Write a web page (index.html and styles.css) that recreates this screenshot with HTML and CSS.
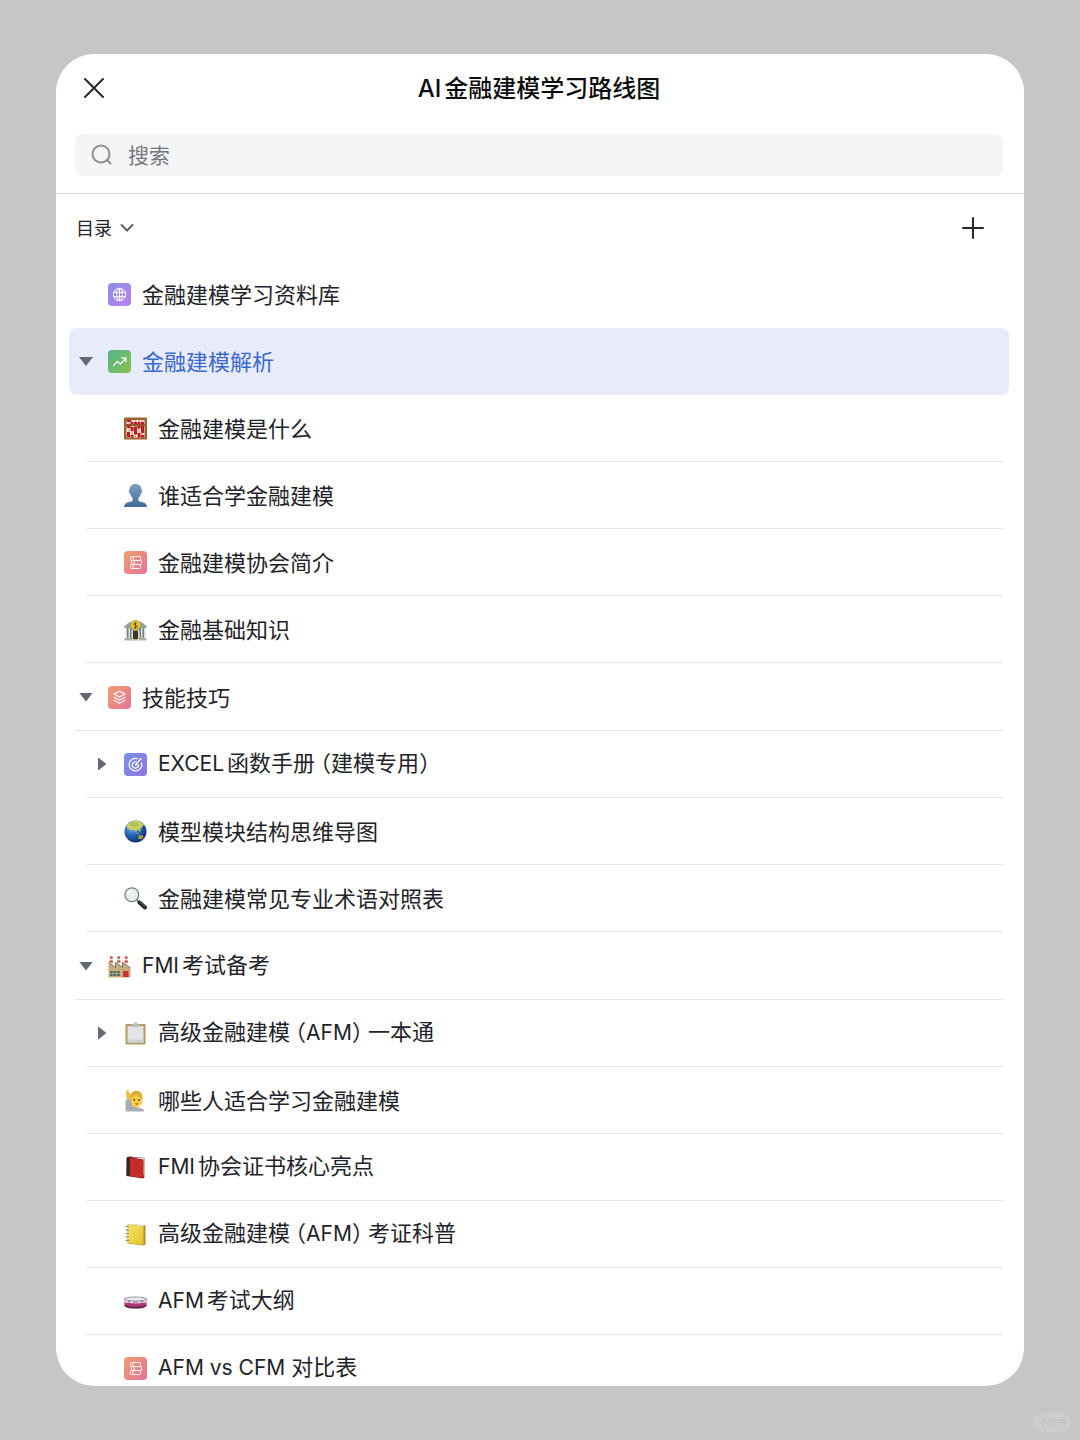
FILE: index.html
```html
<!DOCTYPE html>
<html lang="zh-CN">
<head>
<meta charset="utf-8">
<meta name="viewport" content="width=device-width, initial-scale=1">
<title>AI金融建模学习路线图</title>
<link rel="stylesheet" href="styles.css">
</head>
<body>
<svg class="defs" aria-hidden="true">
  <defs>
    <linearGradient id="g-purple" x1="0" y1="0" x2="1" y2="1"><stop offset="0" stop-color="#8f8be6"/><stop offset="1" stop-color="#b884ea"/></linearGradient>
    <linearGradient id="g-green" x1="0" y1="0" x2="1" y2="1"><stop offset="0" stop-color="#4fb58a"/><stop offset="1" stop-color="#8cbf4c"/></linearGradient>
    <linearGradient id="g-coral" x1="0" y1="0" x2="1" y2="1"><stop offset="0" stop-color="#efa06f"/><stop offset="1" stop-color="#e47398"/></linearGradient>
    <linearGradient id="g-indigo" x1="0" y1="0" x2="1" y2="1"><stop offset="0" stop-color="#7593e6"/><stop offset="1" stop-color="#9273e0"/></linearGradient>
    <linearGradient id="g-person" x1="0" y1="0" x2="0" y2="1"><stop offset="0" stop-color="#7f9fc0"/><stop offset="1" stop-color="#426a9b"/></linearGradient>
    <radialGradient id="g-sea" cx=".35" cy=".3" r=".75"><stop offset="0" stop-color="#6cb4ee"/><stop offset=".5" stop-color="#2467b8"/><stop offset="1" stop-color="#102b6d"/></radialGradient>
    <linearGradient id="g-yellow" x1="0" y1="0" x2="1" y2="1"><stop offset="0" stop-color="#f8e468"/><stop offset="1" stop-color="#e3c22f"/></linearGradient>
    <symbol id="i-doc" viewBox="0 0 23 23">
      <rect width="23" height="23" rx="4" fill="url(#g-coral)"/>
      <g fill="none" stroke="#fff" stroke-opacity=".9" stroke-width="1"><rect x="6.500" y="5.500" width="10" height="4" rx=".8"/><rect x="7.500" y="9.500" width="10" height="4" rx=".8"/><rect x="6.500" y="13.500" width="10" height="4" rx=".8"/><path d="M9 5.500v4M10 9.500v4M9 13.500v4"/></g>
    </symbol>
  </defs>
</svg>

<main class="card">
  <header class="head">
    <div class="titlebar">
      <button class="icon-btn close" type="button" aria-label="关闭"><svg width="22" height="22" viewBox="0 0 22 22"><path d="M2 2l18 18M20 2L2 20"/></svg></button>
      <h1 class="title"><span class="latin">AI</span>金融建模学习路线图</h1>
    </div>
    <label class="search">
      <svg width="22" height="22" viewBox="0 0 22 22"><circle cx="10" cy="10" r="8.500"/><path d="M16 16l3.500 3.500"/></svg>
      <input type="search" placeholder="搜索" aria-label="搜索">
    </label>
  </header>

  <div class="toolbar">
    <button class="catalog" type="button"><span>目录</span><svg width="14" height="10" viewBox="0 0 14 10"><path d="M1.500 2L7 7.500 12.500 2"/></svg></button>
    <button class="icon-btn" type="button" aria-label="新建"><svg width="24" height="24" viewBox="0 0 24 24"><path d="M12 2v20M2 12h20"/></svg></button>
  </div>

  <nav aria-label="目录">
    <ul class="tree">
      <li>
        <div class="row plain"><span class="toggle"></span>
          <svg class="icon" viewBox="0 0 23 23"><rect width="23" height="23" rx="4" fill="url(#g-purple)"/><g fill="none" stroke="#fff" stroke-width="1"><circle cx="11.500" cy="11.500" r="6.200"/><ellipse cx="11.500" cy="11.500" rx="2.800" ry="6.200"/><path d="M5.500 9.300h12M5.500 13.700h12M11.500 5.300v12.400"/></g></svg>
          <a href="#library">金融建模学习资料库</a></div>
      </li>
      <li>
        <div class="row selected"><button class="toggle open" type="button" aria-label="收起"></button>
          <svg class="icon" viewBox="0 0 23 23"><rect width="23" height="23" rx="4" fill="url(#g-green)"/><path d="M5.500 15.500l4-4 3 2.500 5-5.500M13.500 7.800h4.300v4.200" fill="none" stroke="#fff" stroke-width="1.200" stroke-linecap="round" stroke-linejoin="round"/></svg>
          <a href="#analysis" aria-current="page">金融建模解析</a></div>
        <ul class="branch">
          <li class="row"><span class="toggle"></span>
            <svg class="icon" viewBox="0 0 23 23"><rect y=".5" width="23" height="22" rx="1" fill="#9b612f"/><path d="M2.500 3h18v4h-18zM2.500 9h18v11.500h-18z" fill="#f4e5dc"/><path d="M5 3v17M8 3v17M11.500 3v17M15 3v17M18 3v17" stroke="#bd7762" stroke-width=".7"/><path d="M2.500 8h18" stroke="#8c4a25" stroke-width="1.500"/><g fill="#b51f22"><path d="M3 3h4v2H3zM6.500 5h3v2h-3zM10 5h3v2h-3zM13.500 5h3v2h-3zM17 5h3v2h-3zM3 9h3.500v2H3zM3 15h3v5H3zM6.600 10h3v4h-3zM6.600 18h3v2.500h-3zM10 9.500h3.200v8H10zM13.600 9h3v2.500h-3zM13.600 16h3v4.500h-3zM17 9h3v7h-3zM17 18h3v2.500h-3z"/></g></svg>
            <a href="#what">金融建模是什么</a></li>
          <li class="row"><span class="toggle"></span>
            <svg class="icon" viewBox="0 0 23 23"><path d="M11.500 0c4 0 6 2.400 6 6 .7 0 .8.700.600 1.800-.2 1.100-.7 1.800-1.300 1.900-.5 2-1.300 3.300-2.400 4.200v2.300c0 1.100 2 1.400 4.300 2 2.500.7 4 1.800 4.300 4.800H0c.3-3 1.800-4.100 4.300-4.800 2.300-.6 4.300-.9 4.300-2v-2.300c-1.100-.9-1.900-2.200-2.400-4.200-.6-.1-1.100-.8-1.300-1.900C4.700 6.700 4.800 6 5.500 6c0-3.600 2-6 6-6z" fill="url(#g-person)"/></svg>
            <a href="#who">谁适合学金融建模</a></li>
          <li class="row"><span class="toggle"></span>
            <svg class="icon"><use href="#i-doc"/></svg>
            <a href="#association">金融建模协会简介</a></li>
          <li class="row"><span class="toggle"></span>
            <svg class="icon" viewBox="0 0 23 23"><path d="M.5 8L5 4.500 11.500 2 18 4.500 22.500 8v2H.5z" fill="#8fa29b"/><path d="M2 10h19v10H2z" fill="#71827c"/><path d="M9 13h5v8H9z" fill="#40351e"/><path d="M2.200 10v11M5.200 10v11M8.200 12v9M14.800 12v9M17.800 10v11M20.800 10v11" stroke="#dde3df" stroke-width="1.500"/><path d="M.5 20h8v2.500h-8zM14.500 20h8v2.500h-8z" fill="#a5b0aa"/><path d="M9.500 21h4v1.500h-4z" fill="#c09d48"/><circle cx="11.500" cy="7.500" r="5" fill="#e8c934" stroke="#9b8b32" stroke-width=".5"/><path d="M13.300 5.800c-.4-.7-1-.9-1.800-.9-1 0-1.700.5-1.700 1.300 0 1.800 3.600.8 3.600 2.600 0 .8-.8 1.300-1.800 1.300-.9 0-1.600-.4-1.900-1.100M11.500 4v7" fill="none" stroke="#594c13" stroke-width=".9"/></svg>
            <a href="#basics">金融基础知识</a></li>
        </ul>
      </li>
      <li class="section">
        <div class="row"><button class="toggle open" type="button" aria-label="收起"></button>
          <svg class="icon" viewBox="0 0 23 23"><rect width="23" height="23" rx="4" fill="url(#g-coral)"/><g fill="none" stroke="#fff" stroke-width="1.100" stroke-linejoin="round" stroke-linecap="round"><path d="M11.500 5.300l5.500 2.800-5.500 2.800L6 8.100zM6 11.200l5.500 2.900 5.500-2.900M6 14.300l5.500 2.900 5.500-2.900"/></g></svg>
          <a href="#skills">技能技巧</a></div>
        <ul class="branch">
          <li class="row"><button class="toggle" type="button" aria-label="展开"></button>
            <svg class="icon" viewBox="0 0 23 23"><rect width="23" height="23" rx="4" fill="url(#g-indigo)"/><g fill="none" stroke="#fff" stroke-width="1.200" stroke-linecap="round"><path d="M13.500 5.700A6.300 6.300 0 1 0 17.500 10M12 8.800a3.200 3.200 0 1 0 2.700 3.200M11.500 12L17 5.500M14.700 12h-3.200"/></g></svg>
            <a href="#excel"><span class="latin">EXCEL</span>函数手册<span class="paren-open">（</span>建模专用<span class="paren">）</span></a></li>
          <li class="row"><span class="toggle"></span>
            <svg class="icon" viewBox="0 0 23 23"><circle cx="11.500" cy="11.500" r="11" fill="url(#g-sea)"/><path d="M3 5C6 1.500 10 .3 14 1c3 .7 5 2.300 6.500 4.500l-2 .3-.5 2.200-2 .5 1 2-1.500 1.300-1.200-2-1.500.3-.5 2.700-1.500-2.500-2.300-.5-1.500 1-1.500-1.500L3.500 9l-.8-2z" fill="#c7cd61"/><path d="M5 4l4-1.500 4 .8 2 2-4 1-3-.3z" fill="#a9bf58"/><path d="M14 17l2-2 2.500.2 1 2-2 2-3-.2zM13 12.500l2.500 1-.7.900-2.300-.8z" fill="#ab9645"/></svg>
            <a href="#mindmap">模型模块结构思维导图</a></li>
          <li class="row"><span class="toggle"></span>
            <svg class="icon" viewBox="0 0 23 23"><path d="M12.500 12.500l2.500 2.500" stroke="#777" stroke-width="2"/><path d="M15.500 15.500l5.500 5" stroke="#24272b" stroke-width="4" stroke-linecap="round"/><path d="M15.500 14.500l5.500 5" stroke="#74777b" stroke-width=".8"/><circle cx="7.800" cy="7.800" r="6.900" fill="#e9eef0" stroke="#777c80" stroke-width="1.200"/><path d="M3.500 7.500a4.500 4.500 0 0 1 4-4" fill="none" stroke="#fff" stroke-width="1.500"/></svg>
            <a href="#terms">金融建模常见专业术语对照表</a></li>
        </ul>
      </li>
      <li class="section">
        <div class="row"><button class="toggle open" type="button" aria-label="收起"></button>
          <svg class="icon" viewBox="0 0 23 23"><path d="M2 1h2.500l.5 9H1.500zM9.500 1H12l.5 9H9zM17 1h2.500l.5 9h-3.500z" fill="#e7ddd5"/><path d="M1.900 1.500h2.700v2H1.800zM1.600 5.500h3.200v2H1.600zM9.400 1.500h2.700v2H9.300zM9.200 5.500h3.100v2H9.100zM16.900 1.500h2.700v2h-2.800zM16.700 5.500h3.100v2h-3.200z" fill="#c9433b"/><path d="M.5 8l7 5V8l7 5V8l8 5.500v9H.5z" fill="#c9ac7c"/><path d="M.5 7.500l7 5v-5l7 5v-5l8 5.500" fill="none" stroke="#78664c" stroke-width="1"/><path d="M2 16h10v5H2z" fill="#526e72"/><path d="M5 16v5M8.500 16v5M2 18.500h10" stroke="#c9ac7c" stroke-width=".8"/><path d="M15 16h5.500v6H15z" fill="#c83434"/></svg>
          <a href="#fmi"><span class="latin">FMI</span>考试备考</a></div>
        <ul class="branch">
          <li class="row"><button class="toggle" type="button" aria-label="展开"></button>
            <svg class="icon" viewBox="0 0 23 23"><rect x="1.500" y="2" width="20" height="20.500" rx="1" fill="#b2995f"/><path d="M3.500 4h16v16.500h-16z" fill="#e3e4e5"/><path d="M3.500 17.500h16v3h-16z" fill="#cfd1d3"/><path d="M7 2.500h2.500c0-3 4-3 4 0H16V5H7z" fill="#b9bec3"/></svg>
            <a href="#afm-guide">高级金融建模<span class="paren-open">（</span><span class="latin-tight">AFM</span><span class="paren-close">）</span>一本通</a></li>
          <li class="row"><span class="toggle"></span>
            <svg class="icon" viewBox="0 0 23 23"><path d="M1.500 22.500V12l3-4 3 3 1 6 6 1.500 4.500 1.500 1.500 2.500z" fill="#a8adb5"/><path d="M2.500 9L2 3.500 3 .8l1.500.2.300 3 1.700.5.500 3-1.500 3.500z" fill="#efbf35"/><path d="M6.500 9C6.500 4 8.500 2 12.500 2s6.300 3 6 8l-1.200 5h-9z" fill="#d79922"/><ellipse cx="12.500" cy="11.500" rx="5.500" ry="7" fill="#f9cf46"/><path d="M7 9.500c2-.5 4-2 5-3.500 1.500 2 3.500 3 6 3.500-.3-4-2-6.500-5.500-6.500S7 5.500 7 9.500z" fill="#e2b23c"/><circle cx="10.300" cy="11" r=".9" fill="#563717"/><circle cx="15" cy="11" r=".9" fill="#563717"/><path d="M10.500 14.500q2.200 2.300 4.200 0z" fill="#953d20"/></svg>
            <a href="#fit">哪些人适合学习金融建模</a></li>
          <li class="row"><span class="toggle"></span>
            <svg class="icon" viewBox="0 0 23 23"><path d="M3 1l3-.5L20.500 2v19l-1.500 1.500L2.500 20z" fill="#861b18"/><path d="M7 1.200L20.500 2.300v18.500L19.500 19V3.700z" fill="#e5dfd5"/><path d="M2.500 1.500l3.300.4v18.300l-3.300-.6z" fill="#34282b"/><path d="M6 2l13 1.700v18L6 20.200z" fill="#c92c28"/><path d="M11 8l3 .5M11.500 9.500l2 .3" stroke="#a21d1b" stroke-width=".8"/></svg>
            <a href="#certificate"><span class="latin">FMI</span>协会证书核心亮点</a></li>
          <li class="row"><span class="toggle"></span>
            <svg class="icon" viewBox="0 0 23 23"><path d="M3.500 1.500L20.500 2l1 1v18l-1.500 1.500-16.500-2z" fill="#b08a22"/><path d="M3.500 1.500l16 2v18.500l-16-2z" fill="url(#g-yellow)"/><path d="M6 1.500l14 .7-.5 1.300-16-2z" fill="#e9e4cb"/><path d="M1.500 3.500h3.500M1.500 7h3.500M1.500 10.500h3.500M1.500 14h3.500M1.500 17.500h3.500" stroke="#8d8b7d" stroke-width="1"/></svg>
            <a href="#science">高级金融建模<span class="paren-open">（</span><span class="latin-tight">AFM</span><span class="paren-close">）</span>考证科普</a></li>
          <li class="row"><span class="toggle"></span>
            <svg class="icon" viewBox="0 0 23 23"><path d="M.5 8.500v7c1.500 3.800 20.500 3.800 22 0v-7z" fill="#b23679"/><path d="M.5 14.500c2 3 20 3 22 0v1.500c-2 3.400-20 3.400-22 0z" fill="#5e2645"/><ellipse cx="11.500" cy="9" rx="11" ry="2" fill="#eceaee" stroke="#77737f" stroke-width=".7"/><path d="M.8 10c4 1.800 17.400 1.800 21.400 0v2.300c-4 1.500-17.400 1.500-21.400 0z" fill="#efe8f0"/><path d="M3.500 11.800h3M9 12.200h5M16.500 11.800h3" stroke="#73516f" stroke-width=".9"/></svg>
            <a href="#syllabus"><span class="latin">AFM</span>考试大纲</a></li>
          <li class="row"><span class="toggle"></span>
            <svg class="icon"><use href="#i-doc"/></svg>
            <a href="#compare"><span class="latin-tight">AFM vs CFM </span>对比表</a></li>
        </ul>
      </li>
    </ul>
  </nav>
</main>
<span class="watermark">小红书</span>
</body>
</html>
```
FILE: styles.css
```css
* { box-sizing: border-box; }

body {
  margin: 0;
  height: 100vh;
  padding: 54px 56px;
  background: #c6c6c4;
  color: #1f2329;
  font-family: "Noto Sans CJK SC", sans-serif;
  font-size: 22px;
  line-height: 32px;
}

button {
  border: 0;
  padding: 0;
  background: none;
  color: inherit;
  font: inherit;
}

ul { margin: 0; padding: 0; list-style: none; }

a { color: inherit; text-decoration: none; white-space: nowrap; }

.defs { position: absolute; width: 0; height: 0; }

.card {
  height: 100%;
  overflow: hidden;
  border-radius: 38px;
  background: #fff;
}

/* Header */
.head {
  padding: 0 21px 17px 19px;
  border-bottom: 1px solid #dfe0e2;
}

.titlebar {
  display: grid;
  grid-template-columns: 40px 1fr 40px;
  align-items: center;
  height: 68px;
  margin-bottom: 12px;
}

.title {
  grid-column: 2;
  margin: 0;
  color: #0c0d0f;
  font-size: 24px;
  font-weight: 500;
  text-align: center;
}

.icon-btn { display: grid; place-items: center; width: 38px; height: 38px; }

.icon-btn svg,
.catalog svg,
.search svg {
  fill: none;
  stroke: #25282c;
  stroke-width: 2;
  stroke-linecap: round;
}

.search {
  display: flex;
  align-items: center;
  gap: 15px;
  height: 42px;
  padding: 0 16px;
  border-radius: 8px;
  background: #f5f5f6;
}

.search svg { stroke: #8d9197; }

.search input {
  flex: 1;
  min-width: 0;
  padding: 0 0 2px;
  border: 0;
  outline: 0;
  background: none;
  font: inherit;
  font-size: 21px;
}

.search input::placeholder { color: #73777e; opacity: 1; }

/* Toolbar */
.toolbar {
  display: flex;
  align-items: center;
  justify-content: space-between;
  height: 67px;
  padding: 0 32px 0 20px;
}

.catalog { display: flex; align-items: center; gap: 8px; font-size: 18px; }
.catalog span { padding-bottom: 2px; }
.catalog svg { stroke: #5c6168; }

/* Tree */
.tree { padding: 0 21px 0 19px; }

.section { margin-top: 1px; }

.row {
  display: flex;
  align-items: center;
  gap: 11px;
  height: 67px;
  border-bottom: 1px solid #e6e7e9;
}

.row a { padding-bottom: 3px; }

.row.plain { border-bottom-color: transparent; }

.row.selected {
  margin: 0 -6px;
  padding: 0 6px;
  border-bottom: 0;
  border-radius: 8px;
  background: #e8ebfa;
  color: #3c68d1;
}

.branch { padding-left: 11px; }
.branch .row { padding-left: 5px; }

.icon { flex: none; width: 23px; height: 23px; }

.toggle { display: grid; flex: none; place-items: center; width: 22px; height: 32px; }

button.toggle::before {
  content: "";
  width: 9px;
  height: 14px;
  background: #646a73;
  clip-path: polygon(0 0, 100% 50%, 0 100%);
}

button.toggle.open::before {
  width: 14px;
  height: 9px;
  clip-path: polygon(0 0, 100% 0, 50% 100%);
}

/* Mixed-script text */
.latin,
.latin-tight { font-family: Inter, "Liberation Sans", sans-serif; }
.row .latin,
.row .latin-tight { font-size: 21px; }
.latin { margin-right: 3px; }
.latin-tight { white-space: pre; }

.paren,
.paren-open,
.paren-close { font-feature-settings: "halt"; }
.paren-open { margin-left: 5px; }
.paren-close { margin-right: 5px; }

.watermark {
  position: fixed;
  right: 9px;
  bottom: 8px;
  padding: 0 5px;
  border-radius: 10px;
  background: #cdcdcb;
  color: #bfbfbd;
  font-size: 9px;
  line-height: 19px;
}
```
